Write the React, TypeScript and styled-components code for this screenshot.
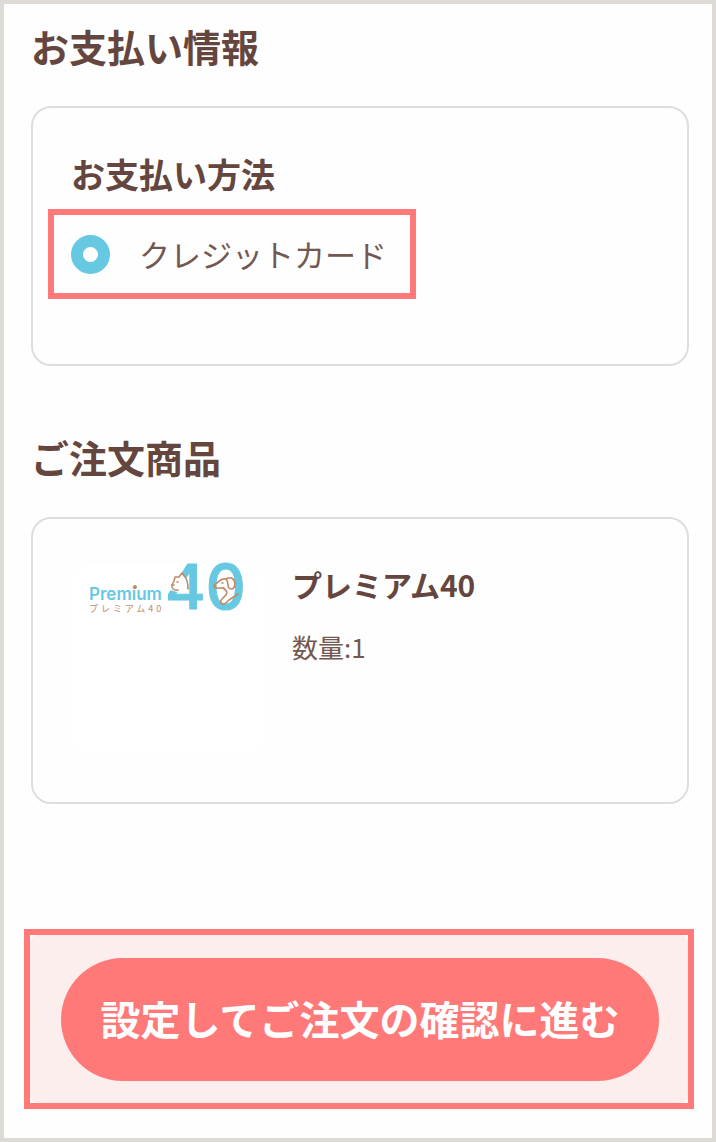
import React from "react";
import styled, { createGlobalStyle } from "styled-components";

const color = {
  text: "#64463f",
  body: "#735851",
  line: "#dfdedc",
  frame: "#dedad5",
  accent: "#ff7979",
  tint: "#fceeed",
  blue: "#66c9e1",
  brown: "#c08a68",
};

const GlobalStyle = createGlobalStyle`
  * { box-sizing: border-box; }
  body {
    margin: 0;
    background: #fefefe;
    color: ${color.text};
    font-family: "Noto Sans CJK JP", "Noto Sans", sans-serif;
  }
`;

const Page = styled.main`
  border: 4px solid ${color.frame};
  padding: 20px 23px 29px 27px;
`;

const Section = styled.section`
  & + & {
    margin-top: 69px;
  }
`;

const SectionTitle = styled.h2`
  margin: 0 0 38px;
  font-size: 38px;
  line-height: 44px;
  font-weight: 700;
`;

const Card = styled.div`
  border: 2px solid ${color.line};
  border-radius: 20px;
  padding: 45px 38px;
`;

const PaymentCard = styled(Card)`
  padding-top: 46px;
  padding-bottom: 65px;
`;

const CardTitle = styled.h3`
  margin: 0 0 15px;
  font-size: 34px;
  line-height: 40px;
  font-weight: 700;
`;

const PaymentOption = styled.label`
  display: flex;
  align-items: center;
  gap: 29px;
  width: fit-content;
  height: 90px;
  margin-left: -23px;
  padding: 0 23px 0 17px;
  border: 6px solid ${color.accent};
  color: ${color.body};
  font-size: 31px;
  line-height: 44px;
`;

const Radio = styled.input`
  appearance: none;
  flex: none;
  width: 39px;
  height: 39px;
  margin: 0;
  border: 12px solid ${color.blue};
  border-radius: 50%;
  background: #fff;
`;

const Product = styled.div`
  display: flex;
  gap: 28px;
`;

const Thumbnail = styled.div`
  flex: none;
  width: 193px;
  height: 193px;
  border-radius: 20px;
  background: #fff;
`;

const Logo = styled.svg`
  display: block;
  overflow: visible;
`;

const ProductName = styled.h3`
  margin: 0 0 21px;
  font-size: 30px;
  line-height: 40px;
  font-weight: 700;
`;

const Quantity = styled.p`
  margin: 0;
  color: ${color.body};
  font-size: 26px;
  line-height: 44px;
`;

const ActionFrame = styled.div`
  margin: 125px -5px 0 -7px;
  border: 6px solid ${color.accent};
`;

const ActionPanel = styled.div`
  padding: 23px 29px 22px 31px;
  border-radius: 8px;
  background: ${color.tint};
`;

const SubmitButton = styled.button`
  display: block;
  width: 100%;
  height: 123px;
  padding: 0 0 4px;
  border: 0;
  border-radius: 62px;
  background: ${color.accent};
  color: #fff;
  font: inherit;
  font-size: 40px;
  line-height: 44px;
  font-weight: 700;
  cursor: pointer;
`;

function PremiumLogo() {
  return (
    <Logo width="193" height="60" viewBox="0 0 193 60" role="img" aria-label="Premium プレミアム40">
      <text x="18" y="36" fill={color.blue} fontFamily="Inter, sans-serif" fontSize="17" fontWeight="600">
        Premium
      </text>
      <circle cx="64" cy="23" r="2" fill={color.brown} />
      <text
        x="18"
        y="48"
        fill={color.brown}
        fontFamily="Noto Sans CJK JP, sans-serif"
        fontSize="9"
        letterSpacing="3"
      >
        プレミアム40
      </text>
      <text
        x="94"
        y="45"
        fill={color.blue}
        stroke={color.blue}
        strokeWidth="1"
        fontFamily="Inter, sans-serif"
        fontSize="62"
        fontWeight="500"
      >
        40
      </text>
      <path d="M98 18 L104 12 L111 9 L115 14 L117 25 L106 28 L99 26 Z" fill="#fff" />
      <g fill="none" stroke={color.brown} strokeWidth="1.6" strokeLinecap="round" strokeLinejoin="round">
        <path d="M107 26 C103 27 100 24 101 21 L103 17 L104 13 L108 13 L111 9 L114 13 C117 16 117 21 117 25" />
        <path d="M106 18 h1 M101 21 h2" />
        <path d="M155 15 C151 14 148 17 146 19 C141 21 143 25 148 24 L153 24" />
        <path d="M155 15 C160 12 164 15 164 20 C164 25 160 26 158 24 C156 22 158 18 155 15" />
        <path d="M152 24 C157 27 157 30 153 33 C150 36 148 38 151 40 C154 41 156 38 158 36 L167 30" />
        <path d="M151 19 h1 M143 22 h2" />
      </g>
    </Logo>
  );
}

export default function App() {
  return (
    <>
      <GlobalStyle />
      <Page>
        <Section>
          <SectionTitle>お支払い情報</SectionTitle>
          <PaymentCard>
            <CardTitle>お支払い方法</CardTitle>
            <PaymentOption>
              <Radio type="radio" name="payment" value="card" defaultChecked />
              クレジットカード
            </PaymentOption>
          </PaymentCard>
        </Section>
        <Section>
          <SectionTitle>ご注文商品</SectionTitle>
          <Card>
            <Product>
              <Thumbnail>
                <PremiumLogo />
              </Thumbnail>
              <div>
                <ProductName>プレミアム40</ProductName>
                <Quantity>数量:1</Quantity>
              </div>
            </Product>
          </Card>
        </Section>
        <ActionFrame>
          <ActionPanel>
            <SubmitButton type="button">設定してご注文の確認に進む</SubmitButton>
          </ActionPanel>
        </ActionFrame>
      </Page>
    </>
  );
}
